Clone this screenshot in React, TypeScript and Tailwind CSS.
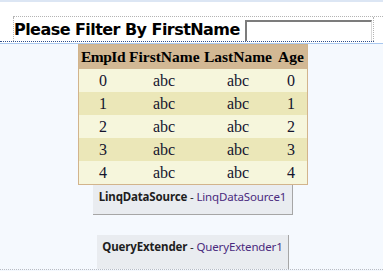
import React from "react";

const rows = [0, 1, 2, 3, 4];

export default function App() {
  return (
    <div className="w-[383px] h-[271px] overflow-hidden bg-[#f5f9fe]">
      <div className="h-[2px] bg-[#dce6f4]" />
      <div className="bg-white pt-[14px]">
        <div className="ml-[13px] border-t border-dotted border-[#b4b4b4]">
          <div className="flex h-[24px] w-[361px] border-l border-r border-dotted border-[#b4b4b4]">
            <span
              className="pt-[3px] text-[16px] leading-[20px] font-bold tracking-[-0.55px] text-black whitespace-nowrap"
              style={{ fontFamily: '"DejaVu Sans", Verdana, sans-serif' }}
            >
              Please Filter By FirstName
            </span>
            <input
              type="text"
              className="ml-auto mr-[1px] mt-[3px] h-[21px] w-[127px] bg-white border-t-2 border-l-2 border-r border-[#7c7c7c] border-r-[#d8d8d8] outline-none"
            />
          </div>
        </div>
        <div className="w-[374px] border-b border-dotted border-[#2f4f8a]" />
        <div className="h-[1px]" />
      </div>
      <div className="h-[1px] bg-[#a9c8ef]" />
      <div className="h-[226px] border-b border-dotted border-[#b8bcc4] flex flex-col items-center pl-[3px]">
        <div className="border border-[#d2b48c]">
          <table
            className="w-[228px] table-fixed text-black"
            style={{ fontFamily: '"Liberation Serif", "Times New Roman", serif' }}
          >
            <colgroup>
              <col className="w-[48px]" />
              <col className="w-[74px]" />
              <col className="w-[74px]" />
              <col className="w-[32px]" />
            </colgroup>
            <thead>
              <tr className="bg-[#d2b894]">
                <th className="p-[2px] text-[15.5px] leading-[20px] font-bold text-center whitespace-nowrap tracking-[-0.5px]">EmpId</th>
                <th className="p-[2px] text-[15.5px] leading-[20px] font-bold text-center whitespace-nowrap">FirstName</th>
                <th className="p-[2px] text-[15.5px] leading-[20px] font-bold text-center whitespace-nowrap">LastName</th>
                <th className="p-[2px] text-[15.5px] leading-[20px] font-bold text-center whitespace-nowrap">Age</th>
              </tr>
            </thead>
            <tbody>
              {rows.map((r) => (
                <tr key={r} className={r % 2 === 1 ? "bg-[#ebe7b8]" : "bg-[#f6f6dc]"}>
                  <td className="p-[2px] text-[16px] leading-[19px] text-center text-[#14142e]">{r}</td>
                  <td className="p-[2px] text-[16px] leading-[19px] text-center text-[#14142e]">abc</td>
                  <td className="p-[2px] text-[16px] leading-[19px] text-center text-[#14142e]">abc</td>
                  <td className="p-[2px] text-[16px] leading-[19px] text-center text-[#14142e]">{r}</td>
                </tr>
              ))}
            </tbody>
          </table>
        </div>
        <div
          className="h-[32px] px-[6px] pt-[4px] bg-[#e9ecf0] border-r border-b border-[#a6a6a6] text-[11.5px] leading-[16px] tracking-[-0.15px] whitespace-nowrap"
          style={{ fontFamily: '"Noto Sans", "Open Sans", sans-serif' }}
        >
          <span className="font-bold text-[#1e1e1e]">LinqDataSource</span>
          <span className="text-[#1e1e1e]"> - </span>
          <span className="text-[#4a2a7e]">LinqDataSource1</span>
        </div>
        <div
          className="mt-[20px] h-[34px] shrink-0 px-[5px] pt-[4px] bg-[#e9ecf0] border-r border-[#a6a6a6] text-[11.5px] leading-[16px] tracking-[-0.15px] whitespace-nowrap"
          style={{ fontFamily: '"Noto Sans", "Open Sans", sans-serif' }}
        >
          <span className="font-bold text-[#1e1e1e]">QueryExtender</span>
          <span className="text-[#1e1e1e]"> - </span>
          <span className="text-[#4a2a7e]">QueryExtender1</span>
        </div>
      </div>
    </div>
  );
}
